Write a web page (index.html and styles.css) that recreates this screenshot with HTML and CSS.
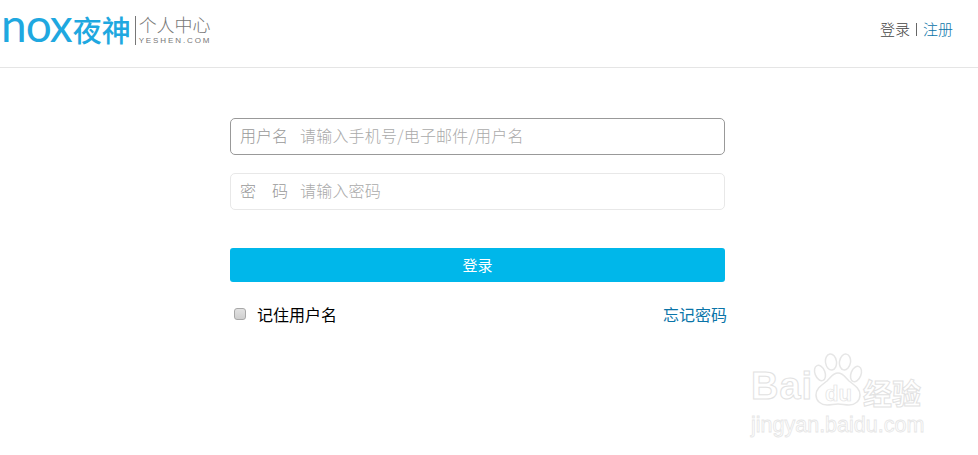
FILE: index.html
```html
<!DOCTYPE html>
<html lang="zh-CN">
  <head>
    <meta charset="utf-8">
    <meta name="viewport" content="width=device-width">
    <title>夜神 个人中心</title>
    <link rel="stylesheet" href="styles.css">
  </head>

  <body>
    <header class="top">
      <a class="logo" href="#">
        <span class="logo-nox">nox</span>
        <span class="logo-name">夜神</span>
        <span class="logo-sub">
          <span class="logo-title">个人中心</span>
          <span class="logo-url">YESHEN.COM</span>
        </span>
      </a>
      <nav class="top-nav">
        <a class="nav-login" href="#">登录</a>
        <span class="nav-sep"></span>
        <a class="nav-reg" href="#">注册</a>
      </nav>
    </header>

    <main class="login">
      <form class="login-form">
        <div class="field field-active">
          <label class="field-label" for="user">用户名</label>
          <input class="field-input" type="text" id="user" placeholder="请输入手机号/电子邮件/用户名">
        </div>
        <div class="field">
          <label class="field-label" for="pass">密 码</label>
          <input class="field-input" type="password" id="pass" placeholder="请输入密码">
        </div>
        <button type="button" class="login-btn">登录</button>
        <div class="login-extra">
          <label class="remember"><input class="remember-box" type="checkbox">记住用户名</label>
          <a class="forgot" href="#">忘记密码</a>
        </div>
      </form>
    </main>

    <div class="watermark">
      <div class="wm-top">
        <span class="wm-bai">Bai</span>
        <span class="wm-paw">
          <svg width="52" height="54" viewBox="0 0 52 54" fill="#fff" stroke="#e6e6e6" stroke-width="1.5">
            <ellipse cx="8" cy="20" rx="5" ry="8" transform="rotate(-22 8 20)"/>
            <ellipse cx="19" cy="9" rx="5.5" ry="8" transform="rotate(-8 19 9)"/>
            <ellipse cx="33" cy="9" rx="5.5" ry="8" transform="rotate(10 33 9)"/>
            <ellipse cx="44" cy="21" rx="5" ry="8" transform="rotate(22 44 21)"/>
            <path d="M26 20c-5 0-7 4-11 8-5 4-11 7-11 14 0 6 5 10 11 10 4 0 7-1 11-1s7 1 11 1c6 0 11-4 11-10 0-7-6-10-11-14-4-4-6-8-11-8z"/>
          </svg>
          <span class="wm-du">du</span>
        </span>
        <span class="wm-jy">经验</span>
      </div>
      <div class="wm-url">jingyan.baidu.com</div>
    </div>
  </body>
</html>
```

FILE: styles.css
```css
body {
    margin: 0;
    font: 16px/1.5 "Liberation Sans", "Noto Sans CJK SC", sans-serif;
    background: #fff;
    overflow: hidden;
}
a {
    text-decoration: none;
}
.top {
    height: 67px;
    border-bottom: 1px solid #e5e5e5;
    display: flex;
    justify-content: space-between;
    align-items: flex-start;
}
.logo {
    display: flex;
    align-items: flex-start;
    height: 67px;
}
.logo-nox {
    font: 400 46px/56px Lato, sans-serif;
    color: #1fa8e0;
    margin: -3px 1px 0 1px;
    letter-spacing: -1px;
    flex: none;
}
.logo-name {
    font: 500 29px/1 "Noto Sans CJK SC", sans-serif;
    color: #1fa8e0;
    margin-top: 15px;
    width: 59px;
    flex: none;
}
.logo-sub {
    margin: 16px 0 0 3px;
    height: 29px;
    padding-left: 3px;
    border-left: 1px solid #777;
    display: flex;
    flex-direction: column;
    color: #777;
}
.logo-title {
    font: 300 18px/20px "Noto Sans CJK SC", sans-serif;
    white-space: nowrap;
    margin-top: -2px;
}
.logo-url {
    font: 8px/9px "Liberation Sans", sans-serif;
    letter-spacing: 1.9px;
    white-space: nowrap;
    margin-top: 2px;
}
.top-nav {
    display: flex;
    align-items: center;
    margin: 18px 25px 0 0;
    font: 300 15px/22px "Noto Sans CJK SC", sans-serif;
}
.nav-login {
    color: #444;
}
.nav-sep {
    width: 1px;
    height: 13px;
    background: #666;
    margin: 0 6px;
}
.nav-reg {
    color: #0a74a8;
}
.login {
    padding: 50px 0 0 230px;
}
.login-form {
    width: 495px;
}
.field {
    box-sizing: border-box;
    height: 37px;
    margin-bottom: 18px;
    padding: 0 9px 4px;
    border: 1px solid #e8e8e8;
    border-radius: 5px;
    display: flex;
    align-items: center;
}
.field-active {
    border-color: #999;
}
.field-label {
    width: 48px;
    margin-right: 12px;
    color: #999;
    font: 300 16px/22px "Noto Sans CJK SC", sans-serif;
    text-align: justify;
    text-align-last: justify;
    flex: none;
}
.field-input {
    flex: 1;
    min-width: 0;
    border: 0;
    outline: 0;
    padding: 0;
    background: none;
    font: 300 16px/22px "Noto Sans CJK SC", sans-serif;
    letter-spacing: 0.2px;
}
.field-input::placeholder {
    color: #aaa;
    opacity: 1;
}
.login-btn {
    display: block;
    width: 100%;
    height: 34px;
    margin-top: 38px;
    border: 0;
    border-radius: 3px;
    padding: 0;
    background: #00b7ea;
    color: #fff;
    font: 400 15px/34px "Noto Sans CJK SC", sans-serif;
}
.login-extra {
    display: flex;
    justify-content: space-between;
    margin-top: 20px;
    width: 497px;
    font: 400 16px/24px "Noto Sans CJK SC", sans-serif;
}
.remember {
    display: flex;
    align-items: center;
    color: #000;
}
.remember-box {
    appearance: none;
    box-sizing: border-box;
    width: 12px;
    height: 12px;
    margin: 0 11px 1px 4px;
    border: 1px solid #a8a8a8;
    border-radius: 3px;
    background: linear-gradient(#e2e2e2, #cfcfcf);
}
.forgot {
    color: #0a74a8;
}
/* baidu watermark sits over the page corner */
.watermark {
    position: absolute;
    left: 751px;
    top: 352px;
    width: 176px;
    color: #fff;
    pointer-events: none;
}
.wm-top {
    display: flex;
    align-items: flex-end;
    height: 56px;
}
.wm-bai {
    font: 700 38px/38px "Liberation Sans", sans-serif;
    -webkit-text-stroke: 1px #e2e2e2;
    letter-spacing: 1px;
    width: 61px;
    margin-bottom: 3px;
}
.wm-paw {
    position: relative;
    width: 51px;
    height: 54px;
    margin-bottom: 1px;
}
.wm-paw svg {
    display: block;
}
.wm-du {
    position: absolute;
    left: 13px;
    top: 30px;
    font: 700 22px/22px "Liberation Sans", sans-serif;
    -webkit-text-stroke: 0.7px #e2e2e2;
}
.wm-jy {
    font: 700 29px/32px "Noto Sans CJK SC", sans-serif;
    -webkit-text-stroke: 1px #e2e2e2;
    white-space: nowrap;
}
.wm-url {
    font: 400 21.5px/24px "Liberation Sans", sans-serif;
    -webkit-text-stroke: 0.8px #e6e6e6;
    white-space: nowrap;
    margin-top: 5px;
}
```
